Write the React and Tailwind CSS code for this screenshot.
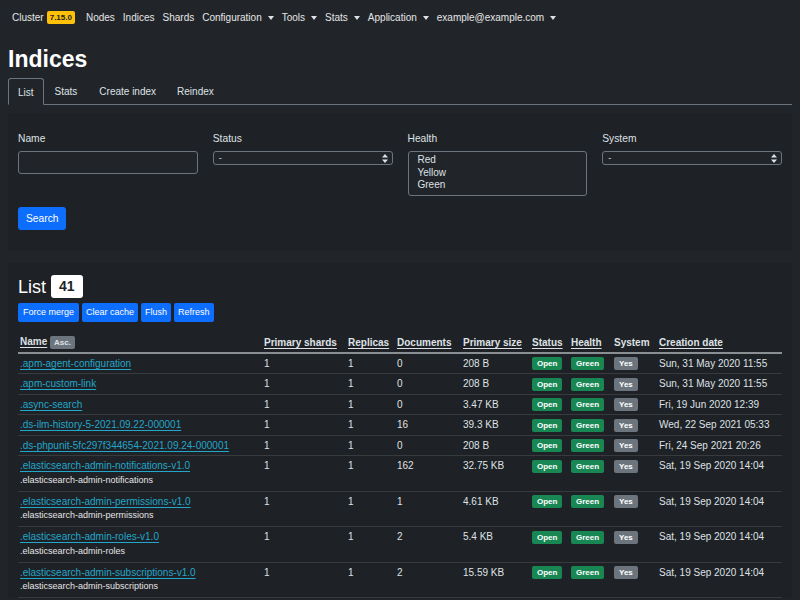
const NAV = [
  { label: 'Nodes' },
  { label: 'Indices' },
  { label: 'Shards' },
  { label: 'Configuration', caret: true },
  { label: 'Tools', caret: true },
  { label: 'Stats', caret: true },
  { label: 'Application', caret: true },
  { label: 'example@example.com', caret: true },
];

const ROWS = [
  { name: '.apm-agent-configuration', docs: '0', size: '208 B', date: 'Sun, 31 May 2020 11:55' },
  { name: '.apm-custom-link', docs: '0', size: '208 B', date: 'Sun, 31 May 2020 11:55' },
  { name: '.async-search', docs: '0', size: '3.47 KB', date: 'Fri, 19 Jun 2020 12:39' },
  { name: '.ds-ilm-history-5-2021.09.22-000001', docs: '16', size: '39.3 KB', date: 'Wed, 22 Sep 2021 05:33' },
  { name: '.ds-phpunit-5fc297f344654-2021.09.24-000001', docs: '0', size: '208 B', date: 'Fri, 24 Sep 2021 20:26' },
  { name: '.elasticsearch-admin-notifications-v1.0', alias: '.elasticsearch-admin-notifications', docs: '162', size: '32.75 KB', date: 'Sat, 19 Sep 2020 14:04' },
  { name: '.elasticsearch-admin-permissions-v1.0', alias: '.elasticsearch-admin-permissions', docs: '1', size: '4.61 KB', date: 'Sat, 19 Sep 2020 14:04' },
  { name: '.elasticsearch-admin-roles-v1.0', alias: '.elasticsearch-admin-roles', docs: '2', size: '5.4 KB', date: 'Sat, 19 Sep 2020 14:04' },
  { name: '.elasticsearch-admin-subscriptions-v1.0', alias: '.elasticsearch-admin-subscriptions', docs: '2', size: '15.59 KB', date: 'Sat, 19 Sep 2020 14:04' },
];

function Caret() {
  return <span className="ml-[6px] inline-block align-middle border-x-[3.5px] border-t-[4px] border-x-transparent border-t-[#dee2e6]" />;
}

function SelectArrows() {
  return (
    <svg width="6" height="9" viewBox="0 0 6 9" className="absolute right-[4px] top-[2px]">
      <path d="M3 0 L6 3.5 H0 Z M3 9 L0 5.5 H6 Z" fill="#dee2e6" />
    </svg>
  );
}

function Badge({ children, color }) {
  return (
    <span className={`mt-[0.5px] inline-block align-top rounded-[2px] px-[5px] py-[2px] text-[8px] font-bold leading-[9px] text-white ${color}`}>
      {children}
    </span>
  );
}

function Th({ children, underline = true, w }) {
  return (
    <th className={`${w} px-[2px] pb-[2px] pt-[2px] text-left align-bottom font-bold`}>
      <span className={underline ? 'underline underline-offset-2' : ''}>{children}</span>
    </th>
  );
}

const cell = 'px-[2px] py-[3px]';

export default function App() {
  return (
    <div className="min-h-screen bg-[#212529] text-[#dee2e6]" style={{ fontFamily: '"Liberation Sans", Arial, sans-serif' }}>
      <nav className="flex h-[35px] items-center gap-[8px] px-[12px] text-[10px] text-[#e6e6e6]">
        <span className="mr-[3px] flex items-center gap-[3px]">
          Cluster
          <span className="rounded-[2px] bg-[#ffc107] px-[3px] py-[2px] text-[8px] font-bold leading-[9px] text-[#212529]">7.15.0</span>
        </span>
        {NAV.map((n) => (
          <span key={n.label} className="flex items-center">
            {n.label}
            {n.caret && <Caret />}
          </span>
        ))}
      </nav>

      <div className="px-[8px]">
        <h1 className="mt-[9px] text-[23px] font-bold leading-[30px] text-white">Indices</h1>

        <div className="mt-[4px] flex border-b border-[#6c757d] text-[10px]">
          <span className="-mb-px rounded-t-[3px] border border-b-[#212529] border-[#6c757d] bg-[#212529] px-[9px] pb-[4px] pt-[6px]">List</span>
          <span className="px-[11px] pb-[4px] pt-[6px]">Stats</span>
          <span className="px-[11px] pb-[4px] pt-[6px]">Create index</span>
          <span className="px-[10px] pb-[4px] pt-[6px]">Reindex</span>
        </div>

        <section className="mt-[8px] bg-[#1e2125] px-[10px] pb-[21px] pt-[18px]">
          <div className="grid grid-cols-4 gap-x-[15px] text-[10.25px]">
            <div>
              <div className="mb-[5px]">Name</div>
              <div className="h-[23px] rounded-[3px] border border-[#6c757d] bg-[#212529]" />
            </div>
            <div>
              <div className="mb-[5px]">Status</div>
              <div className="relative h-[14px] rounded-[3px] border border-[#6c757d] bg-[#212529] pl-[5px] text-[9px] leading-[12px]">
                -
                <SelectArrows />
              </div>
            </div>
            <div>
              <div className="mb-[5px]">Health</div>
              <div className="h-[45px] rounded-[3px] border border-[#6c757d] bg-[#212529] pl-[9px] pt-[2px] text-[10px] leading-[12.5px]">
                <div>Red</div>
                <div>Yellow</div>
                <div>Green</div>
              </div>
            </div>
            <div>
              <div className="mb-[5px]">System</div>
              <div className="relative h-[14px] rounded-[3px] border border-[#6c757d] bg-[#212529] pl-[5px] text-[9px] leading-[12px]">
                -
                <SelectArrows />
              </div>
            </div>
          </div>
          <button className="mt-[11px] h-[23px] rounded-[3px] bg-[#0d6efd] px-[8px] text-[10.25px] text-white">Search</button>
        </section>

        <section className="mt-[12px] bg-[#1e2125] px-[10px] pt-[12px]">
          <div className="flex items-center gap-[5px]">
            <span className="text-[18px] font-medium leading-[22px] text-white">List</span>
            <span className="rounded-[3px] bg-white px-[8px] py-[2px] text-[14px] font-bold leading-[19px] text-[#212529]">41</span>
          </div>
          <div className="mt-[5px] flex gap-[3px] text-[9px] text-white">
            <button className="h-[19px] rounded-[2px] bg-[#0d6efd] px-[5px]">Force merge</button>
            <button className="h-[19px] rounded-[2px] bg-[#0d6efd] px-[4px]">Clear cache</button>
            <button className="h-[19px] rounded-[2px] bg-[#0d6efd] px-[4px]">Flush</button>
            <button className="h-[19px] rounded-[2px] bg-[#0d6efd] px-[4px]">Refresh</button>
          </div>

          <table className="mt-[11px] w-[764px] table-fixed border-collapse text-[10px] leading-[13.5px]">
            <thead>
              <tr className="border-b-2 border-[#8a8f94]">
                <th className="w-[244px] px-[2px] pb-[2px] pt-[2px] text-left font-bold">
                  <span className="underline underline-offset-2">Name</span>{' '}
                  <span className="rounded-[2px] bg-[#6c757d] px-[4px] py-[2px] text-[8px] font-bold">Asc.</span>
                </th>
                <Th w="w-[84px]">Primary shards</Th>
                <Th w="w-[49px]">Replicas</Th>
                <Th w="w-[66px]">Documents</Th>
                <Th w="w-[69px]">Primary size</Th>
                <Th w="w-[39px]">Status</Th>
                <Th w="w-[43px]">Health</Th>
                <Th w="w-[45px]" underline={false}>System</Th>
                <Th w="w-[125px]">Creation date</Th>
              </tr>
            </thead>
            <tbody>
              {ROWS.map((r) => (
                <tr key={r.name} className="border-b border-[#373b3e] align-top">
                  <td className={`px-[2px] ${r.alias ? 'pb-[5px] pt-[3px]' : 'py-[3px]'}`}>
                    <a className="whitespace-nowrap text-[#22a6c9] underline underline-offset-2">{r.name}</a>
                    {r.alias && <div className="mt-[2px] text-[9px] leading-[11px] text-[#e6e6e6]">{r.alias}</div>}
                  </td>
                  <td className={cell}>1</td>
                  <td className={cell}>1</td>
                  <td className={cell}>{r.docs}</td>
                  <td className={cell}>{r.size}</td>
                  <td className={cell}><Badge color="bg-[#198754]">Open</Badge></td>
                  <td className={cell}><Badge color="bg-[#198754]">Green</Badge></td>
                  <td className={cell}><Badge color="bg-[#6c757d]">Yes</Badge></td>
                  <td className={`whitespace-nowrap ${cell}`}>{r.date}</td>
                </tr>
              ))}
            </tbody>
          </table>
        </section>
      </div>
    </div>
  );
}
